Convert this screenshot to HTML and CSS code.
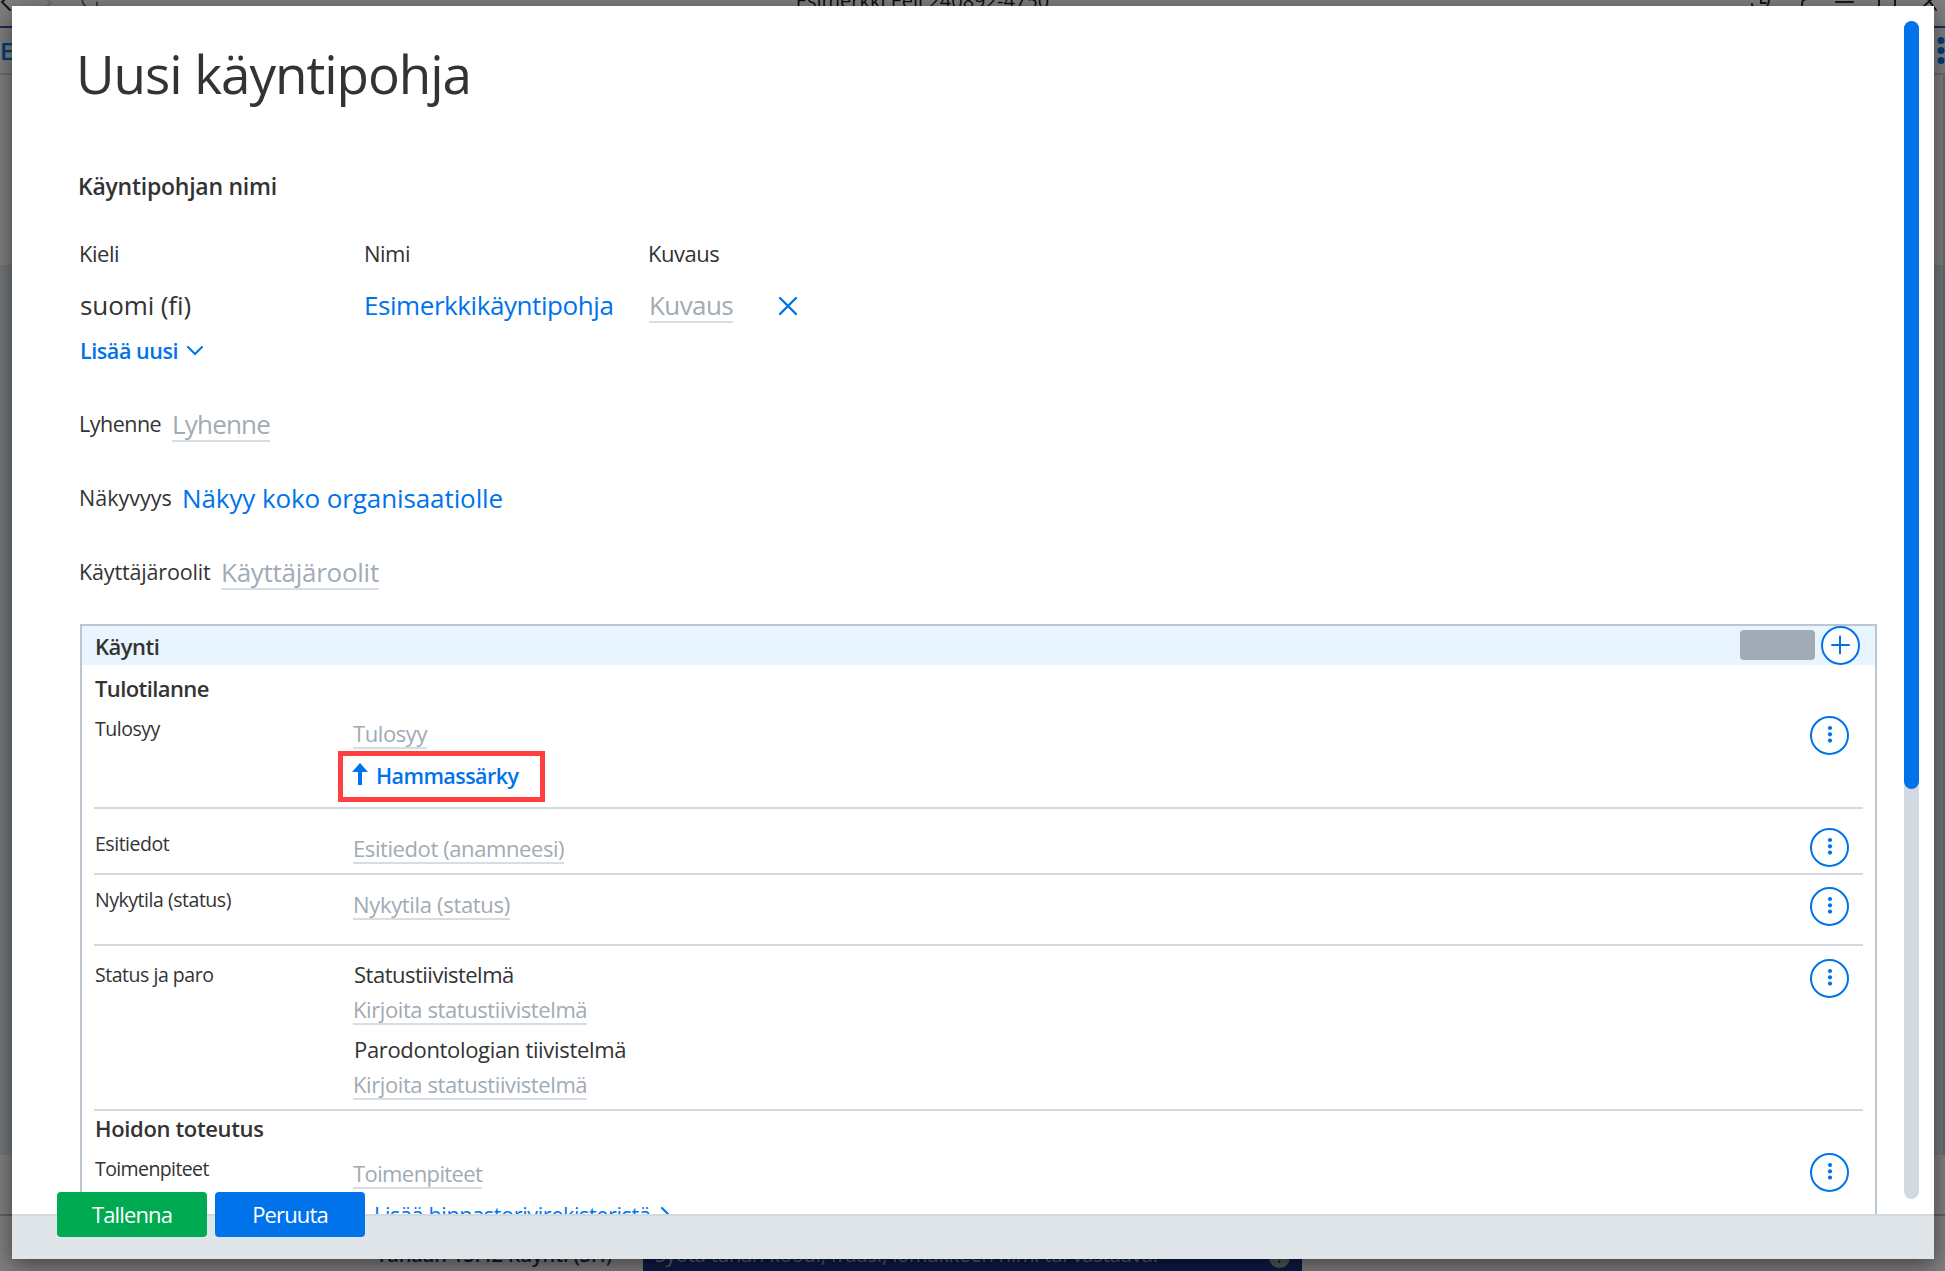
FILE: index.html
```html
<!DOCTYPE html>
<html lang="fi">
<head>
    <meta charset="UTF-8">
    <meta name="viewport" content="width=device-width, initial-scale=1.0">
    <title>Uusi käyntipohja</title>
    <link rel="stylesheet" href="styles.css">
</head>
<body>
    <svg class="sprite">
        <symbol id="dots" viewBox="0 0 39 39">
            <circle cx="20" cy="12" r="2.1"/><circle cx="20" cy="18.3" r="2.1"/><circle cx="20" cy="24.6" r="2.1"/>
        </symbol>
    </svg>

    <!-- Tausta -->
    <div class="app">
        <div class="app-top">
            <svg class="app-nav" width="100" height="12" viewBox="0 0 100 12">
                <path d="M6 -2L2 2l8 8" stroke="#151a20" stroke-width="2"/>
                <path d="M47 0l4 2.500l-4 3.500" stroke="#69727b" stroke-width="2"/>
                <path d="M82 -2c0 5 3 9 8 11M97 6v-4" stroke="#2b3035" stroke-width="1.500"/>
            </svg>
            <span class="app-patient">Esimerkki Eeli 240892-4750</span>
            <svg class="app-window" width="200" height="12" viewBox="0 0 200 12">
                <path d="M7 4c0 2 1 4 3 5M16 -2v5h5M24 0c0 3-1 5-2 7M62 -1c-5 0-5 3-5 8M91 2h17M134 -4v14M150 -4v14M179 6l9-8M182 -2l9 12" stroke="#151a20" stroke-width="2"/>
            </svg>
        </div>
        <div class="app-tools">
            <span>E</span>
            <svg width="8" height="30" viewBox="0 0 8 30"><circle cx="4" cy="4.500" r="3.500"/><circle cx="4" cy="14.500" r="3.500"/><circle cx="4" cy="24.500" r="3.500"/></svg>
        </div>
        <div class="app-panel"></div>
        <div class="app-main"></div>
        <div class="app-space"></div>
        <div class="app-bottom">
            <span class="app-visit">Tänään 15:42 Käynti (SH)</span>
            <div class="app-search"><span>Syötä tähän koodi, fraasi, lomakkeen nimi tai vastaava.</span><i>?</i></div>
        </div>
    </div>

    <div class="modal">
        <div class="modal-body">
            <h1>Uusi käyntipohja</h1>
            <h2>Käyntipohjan nimi</h2>
            <div class="names">
                <div class="head">Kieli</div>
                <div class="head nimi">Nimi</div>
                <div class="head">Kuvaus</div>
                <div class="big suomi">suomi (fi)</div>
                <div class="big blue esimerkki">Esimerkkikäyntipohja</div>
                <div class="last">
                    <span class="big empty kuvaus">Kuvaus</span>
                    <svg class="remove" width="18" height="18" viewBox="0 0 18 18"><path d="M1 1l16 16M17 1L1 17"/></svg>
                </div>
            </div>
            <div class="add">Lisää uusi <svg width="16" height="10" viewBox="0 0 16 10"><path d="M1 1l7 7 7-7"/></svg></div>

            <div class="field"><label class="l1">Lyhenne</label><span class="big empty v1">Lyhenne</span></div>
            <div class="field"><label class="l2">Näkyvyys</label><span class="big blue v2">Näkyy koko organisaatiolle</span></div>
            <div class="field"><label class="l3">Käyttäjäroolit</label><span class="big empty v3">Käyttäjäroolit</span></div>

            <div class="visit">
                <div class="visit-head">
                    <b>Käynti</b>
                    <span class="tag"></span>
                    <span class="round"><svg width="39" height="39" viewBox="0 0 39 39"><path d="M11 19h17M19 10.500v17"/></svg></span>
                </div>
                <div class="visit-body">
                    <h3 class="first">Tulotilanne</h3>
                    <div class="row row-reason">
                        <div class="name">Tulosyy</div>
                        <div class="value">
                            <span class="empty">Tulosyy</span>
                            <div class="link marked">
                                <svg width="16" height="22" viewBox="0 0 16 22"><path d="M8 0l8 9h-6v13h-4V9H0z"/></svg>Hammassärky
                            </div>
                        </div>
                        <span class="round"><svg width="39" height="39"><use href="#dots"/></svg></span>
                    </div>
                    <div class="row row-history">
                        <div class="name">Esitiedot</div>
                        <div class="value"><span class="empty">Esitiedot (anamneesi)</span></div>
                        <span class="round"><svg width="39" height="39"><use href="#dots"/></svg></span>
                    </div>
                    <div class="row row-state">
                        <div class="name">Nykytila (status)</div>
                        <div class="value"><span class="empty">Nykytila (status)</span></div>
                        <span class="round"><svg width="39" height="39"><use href="#dots"/></svg></span>
                    </div>
                    <div class="row row-paro">
                        <div class="name">Status ja paro</div>
                        <div class="value">
                            <p class="status">Statustiivistelmä</p>
                            <span class="empty">Kirjoita statustiivistelmä</span>
                            <p>Parodontologian tiivistelmä</p>
                            <span class="empty">Kirjoita statustiivistelmä</span>
                        </div>
                        <span class="round"><svg width="39" height="39"><use href="#dots"/></svg></span>
                    </div>
                    <h3>Hoidon toteutus</h3>
                    <div class="row row-actions">
                        <div class="name">Toimenpiteet</div>
                        <div class="value">
                            <span class="empty">Toimenpiteet</span>
                            <div class="link price">Lisää hinnastorivirekisteristä <svg width="9" height="16" viewBox="0 0 9 16"><path d="M1 1l7 7-7 7"/></svg></div>
                        </div>
                        <span class="round"><svg width="39" height="39"><use href="#dots"/></svg></span>
                    </div>
                </div>
            </div>
        </div>
        <div class="scrollbar"><div class="thumb"></div></div>
        <div class="modal-footer">
            <button class="save">Tallenna</button>
            <button class="cancel">Peruuta</button>
        </div>
    </div>
</body>
</html>
```

FILE: styles.css
```css
*, *::after {
    box-sizing: border-box;
}
body {
    font-family: "Open Sans", "Noto Sans", sans-serif;
    margin: 0;
    height: 1271px;
    overflow: hidden;
    color: #333;
    background-color: #808080;
}
h1, h2, h3, p {
    margin: 0;
}
svg {
    fill: none;
    stroke-linecap: round;
    display: block;
}
.sprite {
    position: absolute;
    width: 0;
    height: 0;
}

/* tausta */
.app {
    height: 1271px;
    overflow: hidden;
}
.app-top {
    height: 28px;
    border-bottom: 2px solid #1c2a58;
    display: flex;
    justify-content: space-between;
}
.app-patient {
    font-size: 20px;
    line-height: 28px;
    margin-top: -13px;
    color: #0a0d14;
}
.app-tools {
    height: 47px;
    border-bottom: 2px solid #696e73;
    display: flex;
    justify-content: space-between;
    font-size: 24px;
    font-weight: 600;
    line-height: 45px;
    color: #003c7a;
}
.app-tools svg {
    fill: #003c7a;
    margin-top: 8px;
}
.app-panel {
    height: 192px;
    border-bottom: 2px solid #70757a;
    border-right: 2px solid #666b70;
}
.app-main {
    height: 888px;
    background-color: #74777a;
    border-right: 2px solid #5d6973;
}
.app-space {
    height: 61px;
    border-bottom: 2px solid #5b626b;
}
.app-bottom {
    height: 55px;
    display: flex;
    font-size: 22px;
    line-height: 30px;
    padding: 24px 0 0 376px;
}
.app-visit {
    width: 267px;
    color: #10183a;
    font-weight: 600;
    font-size: 20px;
    letter-spacing: -0.1px;
}
.app-search {
    width: 659px;
    height: 40px;
    display: flex;
    justify-content: space-between;
    padding: 0 12px;
    background-color: #0d1a44;
    color: #5f6368;
    font-size: 20px;
    letter-spacing: -0.1px;
}
.app-search i {
    width: 21px;
    height: 21px;
    margin-top: 7px;
    border-radius: 50%;
    background-color: #535960;
    color: #0d1a44;
    font: bold 14px/21px "Open Sans", sans-serif;
    text-align: center;
}

/* ikkuna */
.modal {
    position: absolute;
    left: 12px;
    top: 6px;
    width: 1922px;
    height: 1253px;
    background-color: #fff;
    box-shadow: 0 6px 22px rgba(0, 0, 0, 0.5);
    display: flex;
    flex-direction: column;
}
.modal-body {
    height: 1208px;
    overflow: hidden;
    padding: 32px 57px 0 68px;
}
h1 {
    font-size: 53px;
    font-weight: 400;
    line-height: 72px;
    letter-spacing: -1.05px;
    margin-left: -4px;
}
h2 {
    font-size: 23px;
    font-weight: 600;
    line-height: 32px;
    letter-spacing: -0.25px;
    margin: 60px 0 0 -2px;
}
.names {
    display: grid;
    grid-template-columns: 285px 284px 1fr;
    row-gap: 19px;
    margin-top: 36px;
}
.head {
    font-size: 22px;
    line-height: 30px;
    letter-spacing: -0.5px;
    margin-left: -1px;
}
.big {
    font-size: 26px;
    line-height: 36px;
    height: 36px;
    white-space: nowrap;
}
.suomi { letter-spacing: -0.1px; }
.esimerkki {
    letter-spacing: -0.43px;
    margin-left: -1px;
}
.kuvaus { letter-spacing: -0.6px; }
.v1 { letter-spacing: -0.8px; }
.v2 { letter-spacing: -0.1px; }
.v3 { letter-spacing: -0.27px; }
.blue {
    color: #0073eb;
}
.empty {
    color: #a1abb5;
    border-bottom: 2px solid #d7dde3;
}
.last {
    display: flex;
}
.remove {
    stroke: #0073eb;
    stroke-width: 2.4;
    margin: 10px 0 0 46px;
}
.add {
    display: flex;
    align-items: center;
    gap: 9px;
    margin: 13px 0 40px 0;
    font-size: 21.5px;
    font-weight: 600;
    line-height: 30px;
    letter-spacing: -0.43px;
    color: #0073eb;
}
.add svg, .price svg {
    stroke: #0073eb;
    stroke-width: 2;
}
.field {
    display: flex;
    height: 36px;
    margin-bottom: 38px;
}
.field label {
    font-size: 21.5px;
    line-height: 32px;
    padding-top: 2px;
    margin: 0 1px 0 -1px;
    white-space: nowrap;
}
.l1 {
    width: 92px;
    letter-spacing: -0.5px;
}
.l2 { width: 102px; }
.l3 {
    width: 141px;
    letter-spacing: -0.15px;
}

/* käynti */
.visit {
    margin-top: -4px;
    border: 2px solid #bcc6d0;
    height: 900px;
}
.visit-head {
    height: 39px;
    background-color: #e8f5ff;
    display: flex;
    align-items: center;
    padding: 0 15px 0 13px;
    font-size: 22px;
}
.visit-head b {
    font-weight: 600;
    letter-spacing: -0.5px;
    flex: 1;
}
.tag {
    width: 75px;
    height: 30px;
    border-radius: 4px;
    background-color: #a1abb5;
    margin: 0 6px 1px 0;
}
.round {
    width: 39px;
    height: 39px;
    border: 2px solid #0073eb;
    border-radius: 50%;
    background-color: #fff;
}
.round svg {
    margin: -2px;
    stroke: #0073eb;
    stroke-width: 2;
}
.row .round svg {
    fill: #0073eb;
    stroke: none;
}
.visit-body {
    padding: 8px 12px 0;
}
h3 {
    font-size: 22px;
    font-weight: 600;
    line-height: 30px;
    letter-spacing: -0.35px;
    padding: 2px 0 0 1px;
}
h3.first {
    padding-top: 0;
    letter-spacing: -0.6px;
}
.row {
    display: grid;
    grid-template-columns: 257px 1fr 39px;
    align-items: start;
    padding: 0 14px 0 1px;
    border-bottom: 2px solid #d2d9e0;
}
.name {
    font-size: 19.5px;
    line-height: 28px;
    letter-spacing: -0.47px;
}
.value {
    font-size: 22px;
    line-height: 30px;
    letter-spacing: -0.41px;
    padding-left: 1px;
}
.value .empty {
    display: block;
    width: fit-content;
    height: 30px;
    line-height: 28px;
}
.row-reason {
    height: 106px;
    padding-top: 12px;
}
.row-reason .value { margin-top: 4px; }
.row-reason .round { margin-top: 1px; }
.row-history {
    height: 66px;
    padding-top: 21px;
}
.row-history .value { margin-top: 4px; }
.row-history .round { margin-top: -2px; }
.row-state {
    height: 71px;
    padding-top: 11px;
}
.row-state .value {
    margin-top: 4px;
    letter-spacing: -0.33px;
}
.row-state .round { margin-top: 1px; }
.row-paro {
    height: 165px;
    padding-top: 15px;
}
.row-paro .value { margin-top: -2px; }
.row-paro .round { margin-top: -2px; }
.row-paro p {
    padding-left: 1px;
    letter-spacing: -0.33px;
}
.row-paro .status {
    letter-spacing: -0.5px;
}
.row-paro .empty {
    margin: 6px 0 9px;
}
.row-actions {
    height: 120px;
    padding-top: 12px;
}
.row-actions .name,
.row-actions .empty { letter-spacing: -0.6px; }
.row-actions .value { margin-top: 4px; }
.row-actions .round { margin-top: -2px; }
.link {
    display: flex;
    align-items: center;
    color: #0073eb;
    font-weight: 600;
    font-size: 21.5px;
    letter-spacing: -0.57px;
    margin-top: 12px;
}
.marked {
    position: relative;
    gap: 8px;
}
.marked svg {
    fill: #0073eb;
    margin-left: -1px;
    margin-top: -4px;
}
.marked::after {
    content: "";
    position: absolute;
    left: -15px;
    top: -10px;
    width: 207px;
    height: 51px;
    border: 5px solid #ff4040;
}
.price {
    margin: 11px 0 0 21px;
    gap: 10px;
    font-weight: 500;
    letter-spacing: -0.32px;
}

.scrollbar {
    position: absolute;
    right: 15px;
    top: 15px;
    width: 15px;
    height: 1178px;
    border-radius: 8px;
    background-color: #d2d9e0;
}
.thumb {
    height: 768px;
    border-radius: 8px;
    background-color: #0073eb;
}
.modal-footer {
    height: 45px;
    border-top: 2px solid #d2d9e0;
    background-color: #e0e5e9;
    display: flex;
    gap: 8px;
    padding-left: 45px;
}
button {
    width: 150px;
    height: 45px;
    margin-top: -24px;
    padding: 0 0 2px;
    border: 0;
    border-radius: 4px;
    color: #fff;
    font: 22px "Open Sans", sans-serif;
    letter-spacing: -0.85px;
    position: relative;
}
.save {
    background-color: #00aa50;
}
.cancel {
    background-color: #0073eb;
}
```
